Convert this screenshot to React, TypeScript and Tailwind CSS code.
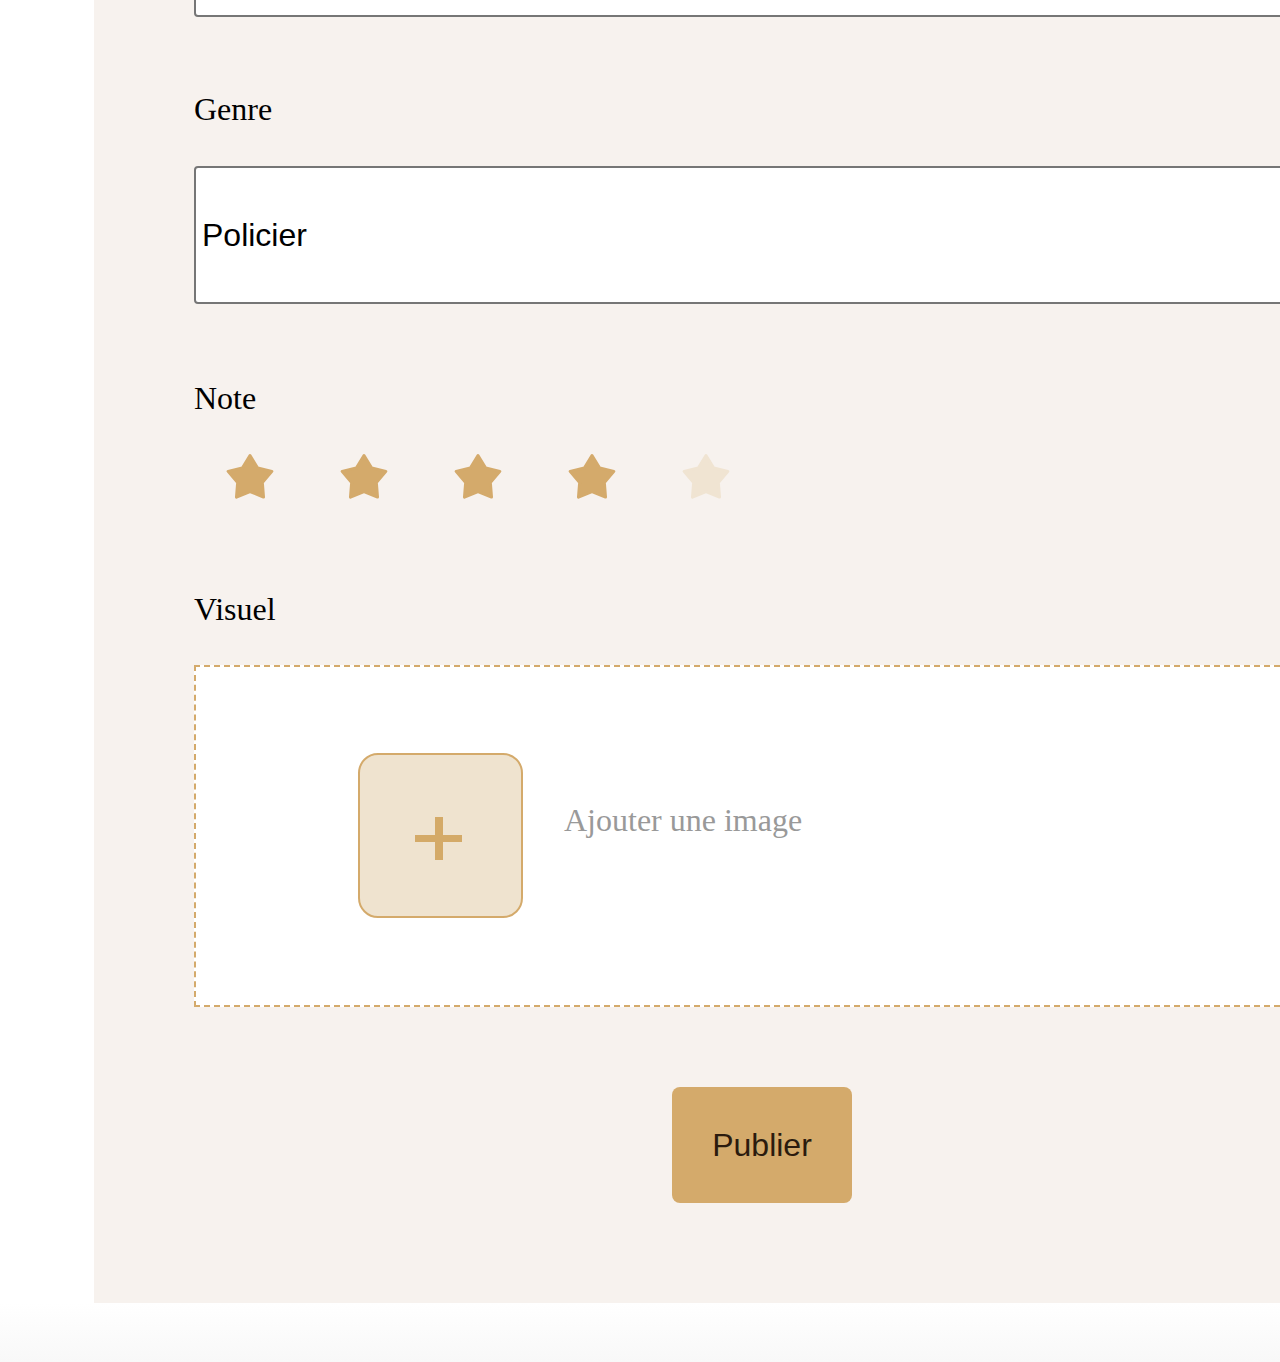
import { useState } from "react";

const GOLD = "#d4aa6b";

function StarIcon({ filled }: { filled: boolean }) {
  const color = filled ? GOLD : "#f0e4d2";
  return (
    <svg width="48" height="48" viewBox="0 0 48 48" aria-hidden="true">
      <polygon
        points="24,2.5 31.64,14.98 45.88,18.39 36.36,29.52 37.52,44.11 24,38.5 10.48,44.11 11.64,29.52 2.12,18.39 16.36,14.98"
        fill={color}
        stroke={color}
        strokeWidth="3"
        strokeLinejoin="round"
      />
    </svg>
  );
}

export default function App() {
  const [rating, setRating] = useState(4);
  const [genre, setGenre] = useState("Policier");

  return (
    <div className="min-h-[1362px] w-full overflow-hidden bg-white">
      <div className="pl-[94px]">
        <div className="w-[1336px] bg-[#f7f2ee] px-[100px] pb-[100px] font-['Liberation_Serif',serif] text-black">
          {/* previous field (scrolled out) */}
          <input
            type="text"
            readOnly
            className="-mt-[121px] block h-[138px] w-full rounded border-2 border-[#767676] bg-white"
          />

          {/* Genre */}
          <label className="mt-[74px] block text-[32px] leading-[37px]">Genre</label>
          <input
            type="text"
            value={genre}
            onChange={(e) => setGenre(e.target.value)}
            className="mt-[38px] block h-[138px] w-full rounded border-2 border-[#767676] bg-white px-[6px] font-['Liberation_Sans',Arial,sans-serif] text-[32px] text-black outline-none"
          />

          {/* Note */}
          <label className="mt-[76px] block text-[32px] leading-[37px]">Note</label>
          <div className="mt-[36px] flex gap-[2px]">
            {[1, 2, 3, 4, 5].map((n) => (
              <button
                key={n}
                type="button"
                onClick={() => setRating(n)}
                className="flex h-[48px] w-[112px] items-center justify-center"
              >
                <StarIcon filled={n <= rating} />
              </button>
            ))}
          </div>

          {/* Visuel */}
          <label className="mt-[90px] block text-[32px] leading-[37px]">Visuel</label>
          <div className="mt-[37px] flex h-[342px] items-start border-2 border-dashed border-[#d4aa6b] bg-white pl-[162px] pt-[86px]">
            <button
              type="button"
              className="relative h-[165px] w-[165px] shrink-0 rounded-[20px] border-2 border-[#d4aa6b] bg-[#efe3cf]"
            >
              <span className="absolute left-[55px] top-[80px] h-[7px] w-[47px] bg-[#d4aa68] blur-[0.5px]" />
              <span className="absolute left-[75px] top-[62px] h-[43px] w-[8px] bg-[#d4aa68] blur-[0.5px]" />
            </button>
            <span className="ml-[41px] mt-[49px] text-[32px] leading-[37px] text-[#999999]">
              Ajouter une image
            </span>
          </div>

          {/* Submit */}
          <div className="mt-[80px] flex justify-center">
            <button
              type="button"
              className="h-[116px] w-[180px] rounded-lg bg-[#d4aa6b] font-['Liberation_Sans',Arial,sans-serif] text-[32px] text-[#2b1b0e]"
            >
              Publier
            </button>
          </div>
        </div>
      </div>
      <div className="h-[59px] w-full bg-gradient-to-b from-white to-[#f8f8f8]" />
    </div>
  );
}
